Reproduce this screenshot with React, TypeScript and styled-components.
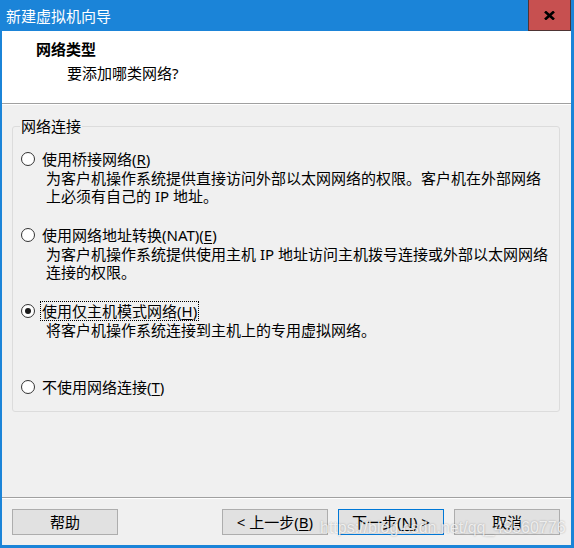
import React from "react";
import styled, { createGlobalStyle } from "styled-components";

const BLUE = "#1b84d8";
const UI_FONT = `"Noto Sans", "Noto Sans CJK SC", sans-serif`;

const GlobalStyle = createGlobalStyle`
  html, body { margin: 0; padding: 0; background: #f0f0f0; }
  * { box-sizing: border-box; }
`;

const Window = styled.div`
  position: relative;
  width: 574px;
  height: 548px;
  display: flex;
  flex-direction: column;
  background: #f0f0f0;
  border-left: 2px solid ${BLUE};
  border-right: 3px solid ${BLUE};
  border-bottom: 3px solid ${BLUE};
  font-family: ${UI_FONT};
  font-size: 15px;
  color: #000;
  overflow: hidden;
`;

const TitleBar = styled.div`
  flex: none;
  height: 31px;
  display: flex;
  align-items: stretch;
  justify-content: space-between;
  background: ${BLUE};
  color: #fff;
`;

const Title = styled.div`
  display: flex;
  align-items: center;
  padding: 1px 0 0 4px;
  font-size: 15px;
  line-height: 18px;
`;

const CloseButton = styled.div`
  width: 43px;
  display: flex;
  align-items: center;
  justify-content: center;
  background: #c75050;
  border: 1px solid #4e3434;
  border-top: none;
`;

const Header = styled.div`
  flex: none;
  height: 73px;
  background: #fff;
  border-bottom: 1px solid #a0a0a0;
  box-shadow: 0 1px 0 #fff;
  padding: 9px 0 0 34px;
`;

const HeaderTitle = styled.div`
  font-weight: bold;
  line-height: 18px;
`;

const HeaderSubtitle = styled.div`
  margin-top: 6px;
  padding-left: 31px;
  line-height: 18px;
`;

const Body = styled.div`
  flex: 1;
  padding: 13px 11px 0 10px;
`;

const GroupBox = styled.fieldset`
  margin: 0;
  min-width: 0;
  padding: 14px 10px 14px 8px;
  border: 1px solid #dcdcdc;
  border-radius: 3px;
`;

const Legend = styled.legend`
  padding: 0 1px;
  margin-left: -1px;
  line-height: 18px;
`;

const OptionList = styled.div`
  display: flex;
  flex-direction: column;
  gap: 20px;
`;

const Option = styled.div<{ $tall?: boolean }>`
  display: flex;
  flex-direction: column;
  min-height: ${(p) => (p.$tall ? "56px" : "20px")};
`;

const OptionRow = styled.div`
  height: 20px;
  display: flex;
  align-items: center;
`;

const RadioCircle = styled.span<{ $checked?: boolean }>`
  flex: none;
  width: 14px;
  height: 14px;
  border-radius: 50%;
  border: 1px solid #333;
  background: #fff;
  display: flex;
  align-items: center;
  justify-content: center;
  &::after {
    content: "";
    width: 6px;
    height: 6px;
    border-radius: 50%;
    background: #1a1a1a;
    display: ${(p) => (p.$checked ? "block" : "none")};
  }
`;

const OptionLabel = styled.span<{ $focused?: boolean }>`
  margin-left: 5px;
  padding: 0 1px;
  line-height: 18px;
  border: 1px dotted ${(p) => (p.$focused ? "#000" : "transparent")};
`;

const Key = styled.u`
  text-decoration: underline;
  text-underline-offset: 2px;
`;

const Description = styled.div`
  padding-left: 25px;
  line-height: 18px;
`;

const Footer = styled.div`
  flex: none;
  display: flex;
  justify-content: space-between;
  border-top: 1px solid #a0a0a0;
  box-shadow: inset 0 1px 0 #fff;
  padding: 11px 11px 10px 10px;
`;

const ButtonGroup = styled.div`
  display: flex;
  gap: 10px;
`;

const Button = styled.button<{ $default?: boolean }>`
  width: 106px;
  height: 26px;
  padding: 0;
  border: 1px solid ${(p) => (p.$default ? "#0078d7" : "#adadad")};
  background: #e1e1e1;
  font-family: ${UI_FONT};
  font-size: 15px;
  line-height: 18px;
  color: #000;
`;

const Watermark = styled.div`
  position: absolute;
  left: 318px;
  top: 519px;
  font-family: "Liberation Sans", Arial, sans-serif;
  font-size: 16px;
  line-height: 18px;
  color: rgba(255, 255, 255, 0.75);
  text-shadow: 0 0 2px rgba(0, 0, 0, 0.3);
  pointer-events: none;
  white-space: nowrap;
`;

type Opt = {
  label: React.ReactNode;
  desc?: React.ReactNode[];
  checked?: boolean;
};

const options: Opt[] = [
  {
    label: (
      <>
        使用桥接网络(<Key>R</Key>)
      </>
    ),
    desc: [
      "为客户机操作系统提供直接访问外部以太网网络的权限。客户机在外部网络",
      "上必须有自己的 IP 地址。",
    ],
  },
  {
    label: (
      <>
        使用网络地址转换(NAT)(<Key>E</Key>)
      </>
    ),
    desc: [
      "为客户机操作系统提供使用主机 IP 地址访问主机拨号连接或外部以太网网络",
      "连接的权限。",
    ],
  },
  {
    label: (
      <>
        使用仅主机模式网络(<Key>H</Key>)
      </>
    ),
    desc: ["将客户机操作系统连接到主机上的专用虚拟网络。"],
    checked: true,
  },
  {
    label: (
      <>
        不使用网络连接(<Key>T</Key>)
      </>
    ),
  },
];

export default function App() {
  return (
    <>
      <GlobalStyle />
      <Window>
        <TitleBar>
          <Title>新建虚拟机向导</Title>
          <CloseButton>
            <svg width="11" height="9" viewBox="0 0 11 9">
              <path d="M1 0.5 L10 8.5 M10 0.5 L1 8.5" stroke="#000" strokeWidth="2.6" fill="none" />
            </svg>
          </CloseButton>
        </TitleBar>
        <Header>
          <HeaderTitle>网络类型</HeaderTitle>
          <HeaderSubtitle>要添加哪类网络?</HeaderSubtitle>
        </Header>
        <Body>
          <GroupBox>
            <Legend>网络连接</Legend>
            <OptionList>
              {options.map((o, i) => (
                <Option key={i} $tall={!!o.desc}>
                  <OptionRow>
                    <RadioCircle $checked={o.checked} />
                    <OptionLabel $focused={o.checked}>{o.label}</OptionLabel>
                  </OptionRow>
                  {o.desc?.map((d, j) => (
                    <Description key={j}>{d}</Description>
                  ))}
                </Option>
              ))}
            </OptionList>
          </GroupBox>
        </Body>
        <Footer>
          <Button>帮助</Button>
          <ButtonGroup>
            <Button>
              &lt; 上一步(<Key>B</Key>)
            </Button>
            <Button $default>
              下一步(<Key>N</Key>) &gt;
            </Button>
            <Button>取消</Button>
          </ButtonGroup>
        </Footer>
        <Watermark>https://blog.csdn.net/qq_43560776</Watermark>
      </Window>
    </>
  );
}
